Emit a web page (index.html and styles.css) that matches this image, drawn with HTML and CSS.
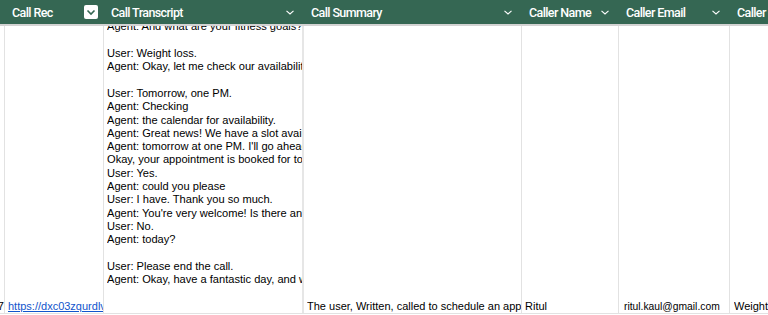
FILE: index.html
```html
<!DOCTYPE html>
<html lang="en">
<head>
<meta charset="utf-8">
<title>Calls</title>
<link rel="stylesheet" href="styles.css">
</head>
<body>
<div class="sheet">
  <div class="row head">
    <div class="hcell"></div>
    <div class="hcell"><span>Call Rec</span>
      <span class="checkbox"><svg width="14" height="14" viewBox="0 0 14 14"><rect x="0" y="0" width="14" height="14" rx="2" fill="#fff"/><polyline points="3.5,5.5 7,9 10.5,5.5" fill="none" stroke="#356753" stroke-width="1.6"/></svg></span></div>
    <div class="hcell"><span>Call Transcript</span><svg class="chev" width="8" height="5" viewBox="0 0 8 5"><polyline points="0.5,0.8 4,4 7.5,0.8" fill="none" stroke="#fff" stroke-width="1.1"/></svg></div>
    <div class="hcell"><span>Call Summary</span><svg class="chev" width="8" height="5" viewBox="0 0 8 5"><polyline points="0.5,0.8 4,4 7.5,0.8" fill="none" stroke="#fff" stroke-width="1.1"/></svg></div>
    <div class="hcell"><span>Caller Name</span><svg class="chev" width="8" height="5" viewBox="0 0 8 5"><polyline points="0.5,0.8 4,4 7.5,0.8" fill="none" stroke="#fff" stroke-width="1.1"/></svg></div>
    <div class="hcell"><span>Caller Email</span><svg class="chev" width="8" height="5" viewBox="0 0 8 5"><polyline points="0.5,0.8 4,4 7.5,0.8" fill="none" stroke="#fff" stroke-width="1.1"/></svg></div>
    <div class="hcell"><span class="clip">Caller Goal</span></div>
  </div>
  <div class="row body">
    <div class="cell num"><span>27</span></div>
    <div class="cell"><span class="clip"><a href="#">https://dxc03zqurdlvk.cloudfront.net/recordings/call-27.mp3</a></span></div>
    <div class="cell transcript"><div class="text">Agent: And what are your fitness goals?

User: Weight loss.
Agent: Okay, let me check our availability for you. When would you like to come in?

User: Tomorrow, one PM.
Agent: Checking
Agent: the calendar for availability.
Agent: Great news! We have a slot available
Agent: tomorrow at one PM. I'll go ahead and book that for you.
Okay, your appointment is booked for tomorrow at one PM.
User: Yes.
Agent: could you please
User: I have. Thank you so much.
Agent: You're very welcome! Is there anything else I can help you with
User: No.
Agent: today?

User: Please end the call.
Agent: Okay, have a fantastic day, and we look forward to seeing you.</div></div>
    <div class="cell"><span class="clip">The user, Written, called to schedule an appointment for a fitness consultation.</span></div>
    <div class="cell"><span class="clip">Ritul</span></div>
    <div class="cell email"><span class="clip">ritul.kaul@gmail.com</span></div>
    <div class="cell last"><span class="clip">Weight loss</span></div>
  </div>
</div>
</body>
</html>
```
FILE: styles.css
```css
html, body {
  margin: 0;
  padding: 0;
  background: #fff;
}
.sheet {
  width: 768px;
  overflow: hidden;
}
.row {
  display: grid;
  grid-template-columns: 5px 99px 200px 218px 97px 111px 39px;
}
.head {
  height: 24px;
  background: #356753;
  border-bottom: 2px solid #d3d3d3;
}
.hcell {
  display: flex;
  align-items: center;
  justify-content: space-between;
  padding: 0 10px 0 7px;
  color: #fff;
  font-family: Roboto, "Liberation Sans", sans-serif;
  font-weight: 500;
  font-size: 12.5px;
  letter-spacing: -0.6px;
  white-space: nowrap;
  overflow: hidden;
}
.hcell:first-child {
  padding: 0;
}
.hcell:nth-child(2) {
  padding-right: 6px;
}
.hcell:last-child {
  padding-right: 0;
}
.checkbox {
  display: flex;
}
.chev {
  display: block;
  flex-shrink: 0;
}
.clip {
  display: block;
  overflow: hidden;
  min-width: 0;
}
.body {
  height: 287px;
  border-bottom: 1px solid #e2e2e2;
}
.cell {
  display: flex;
  flex-direction: column;
  justify-content: flex-end;
  overflow: hidden;
  border-right: 1px solid #e2e2e2;
  padding: 0 0 0 3px;
  font-family: "Liberation Sans", Arial, sans-serif;
  font-size: 11px;
  line-height: 13.3px;
  color: #000;
  white-space: nowrap;
}
.cell a {
  color: #1155cc;
  text-decoration: underline;
}
.num {
  padding: 0;
  align-items: flex-end;
}
.transcript {
  padding: 0 0 26.6px 3px;
  border-right: 2px solid #e6e6e6;
  font-size: 11.1px;
}
.transcript .text {
  white-space: pre;
  flex-shrink: 0;
  overflow: hidden;
}
.email {
  padding-left: 5px;
  font-size: 10.3px;
}
.last {
  padding-left: 4px;
  border-right: none;
}
```
